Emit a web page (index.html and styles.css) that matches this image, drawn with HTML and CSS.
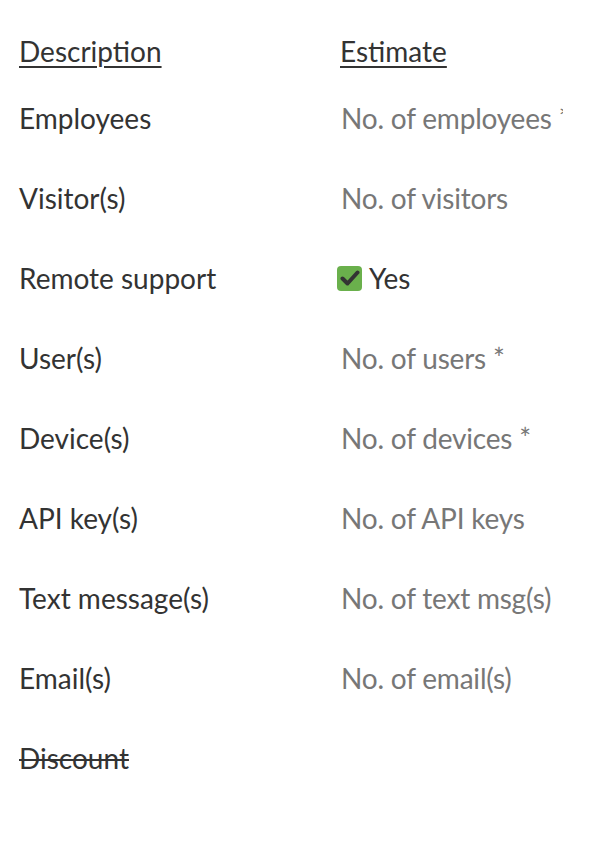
FILE: index.html
```html
<!DOCTYPE html>
<html>
<head>
<meta charset="utf-8">
<link rel="stylesheet" href="styles.css">
</head>
<body>
<div class="table">
  <div class="row head"><div class="c1"><u>Description</u></div><div class="c2"><u>Estimate</u></div></div>
  <div class="row"><div class="c1">Employees</div><div class="c2"><input class="field" placeholder="No. of employees *"></div></div>
  <div class="row"><div class="c1">Visitor(s)</div><div class="c2"><input class="field" placeholder="No. of visitors"></div></div>
  <div class="row"><div class="c1">Remote support</div><div class="c2 check"><span class="box"><svg width="20" height="18" viewBox="0 0 20 18"><path d="M2.5 9.5 L7.5 14.5 L17.5 3.5" fill="none" stroke="#333" stroke-width="4" stroke-linecap="round" stroke-linejoin="round"/></svg></span><span>Yes</span></div></div>
  <div class="row"><div class="c1">User(s)</div><div class="c2"><input class="field" placeholder="No. of users *"></div></div>
  <div class="row"><div class="c1">Device(s)</div><div class="c2"><input class="field" placeholder="No. of devices *"></div></div>
  <div class="row"><div class="c1">API key(s)</div><div class="c2"><input class="field" placeholder="No. of API keys"></div></div>
  <div class="row"><div class="c1">Text message(s)</div><div class="c2"><input class="field" placeholder="No. of text msg(s)"></div></div>
  <div class="row"><div class="c1">Email(s)</div><div class="c2"><input class="field" placeholder="No. of email(s)"></div></div>
  <div class="row"><div class="c1"><s>Discount</s></div><div class="c2"></div></div>
</div>
</body>
</html>
```
FILE: styles.css
```css
html, body { margin: 0; padding: 0; background: #fff; }
body { font-family: Lato, "Open Sans", sans-serif; font-size: 28px; color: #333; }
.table { padding: 0 0 0 19px; }
.row { display: grid; grid-template-columns: 321px 1fr; height: 80px; align-items: center; box-sizing: border-box; }
.head { padding-top: 24px; height: 78px; }
.head u { text-underline-offset: 4px; text-decoration-thickness: 1.5px; }
.field { font-family: inherit; font-size: 28px; letter-spacing: -0.2px; color: #333; border: none; outline: none; background: transparent; padding: 0 1px; width: 224px; height: 40px; box-sizing: border-box; }
.field::placeholder { color: #777; opacity: 1; }
.check { display: flex; align-items: center; gap: 7px; }
.box { width: 25px; height: 25px; background: #6ab04c; border-radius: 4px; display: flex; align-items: center; justify-content: center; margin-left: -3px; }
s { text-decoration-thickness: 2px; }
```
